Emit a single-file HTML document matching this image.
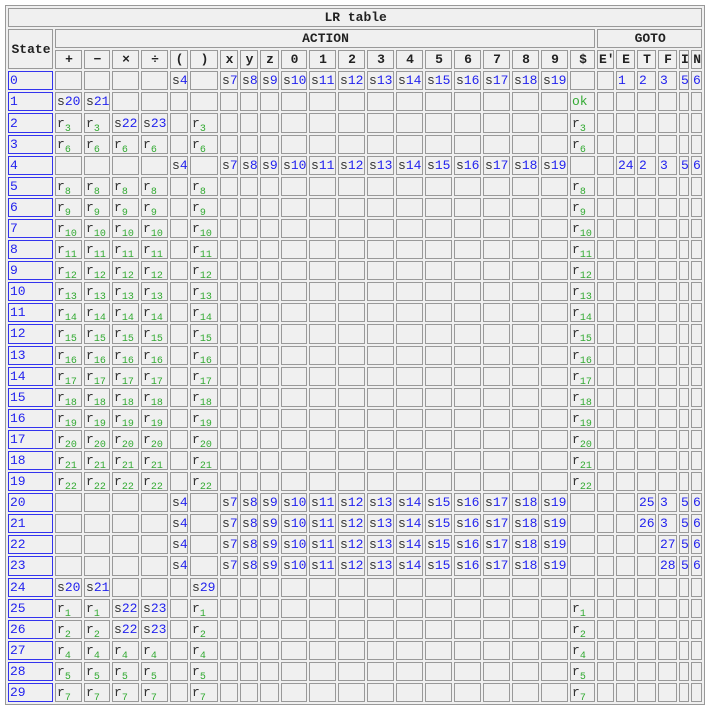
<!DOCTYPE html>
<html><head><meta charset="utf-8"><style>
body{margin:0;background:#fff;}
table{position:absolute;left:5px;top:5px;border:1px solid #999;border-spacing:2px;table-layout:fixed;width:700px;background:#f0f0f0;font-family:"Liberation Mono",monospace;font-size:13px;color:#333;}
td,th{border:1px solid #999;padding:0 0 0 1px;height:19.1px;box-sizing:border-box;white-space:nowrap;overflow:hidden;text-align:left;line-height:15px;}
th{text-align:center;font-weight:bold;font-size:13px;color:#222;}
td.st{border-color:#3333ee;color:#2222ee;}
b{font-weight:normal;color:#2222ee;}
sub{color:#33aa33;font-size:10px;vertical-align:-4px;line-height:0;}
i{font-style:normal;color:#33aa33;}
td.g{color:#2222ee;}
</style></head><body>
<table>
<colgroup>
<col style="width:45px"><col style="width:27px"><col style="width:26px"><col style="width:27px"><col style="width:27px"><col style="width:18px"><col style="width:28px"><col style="width:18px"><col style="width:18px"><col style="width:19px"><col style="width:26px"><col style="width:27px"><col style="width:27px"><col style="width:27px"><col style="width:27px"><col style="width:27px"><col style="width:27px"><col style="width:27px"><col style="width:27px"><col style="width:27px"><col style="width:25px"><col style="width:17px"><col style="width:19px"><col style="width:19px"><col style="width:19px"><col style="width:10px"><col style="width:11px">
</colgroup>
<tr><th colspan="27">LR table</th></tr>
<tr><th rowspan="2">State</th><th colspan="20">ACTION</th><th colspan="6">GOTO</th></tr>
<tr><th>+</th><th>−</th><th>×</th><th>÷</th><th>(</th><th>)</th><th>x</th><th>y</th><th>z</th><th>0</th><th>1</th><th>2</th><th>3</th><th>4</th><th>5</th><th>6</th><th>7</th><th>8</th><th>9</th><th>$</th><th>E'</th><th>E</th><th>T</th><th>F</th><th>I</th><th>N</th></tr>
<tr><td class="st">0</td><td></td><td></td><td></td><td></td><td>s<b>4</b></td><td></td><td>s<b>7</b></td><td>s<b>8</b></td><td>s<b>9</b></td><td>s<b>10</b></td><td>s<b>11</b></td><td>s<b>12</b></td><td>s<b>13</b></td><td>s<b>14</b></td><td>s<b>15</b></td><td>s<b>16</b></td><td>s<b>17</b></td><td>s<b>18</b></td><td>s<b>19</b></td><td></td><td></td><td class="g">1</td><td class="g">2</td><td class="g">3</td><td class="g">5</td><td class="g">6</td></tr>
<tr><td class="st">1</td><td>s<b>20</b></td><td>s<b>21</b></td><td></td><td></td><td></td><td></td><td></td><td></td><td></td><td></td><td></td><td></td><td></td><td></td><td></td><td></td><td></td><td></td><td></td><td><i>ok</i></td><td></td><td></td><td></td><td></td><td></td><td></td></tr>
<tr><td class="st">2</td><td>r<sub>3</sub></td><td>r<sub>3</sub></td><td>s<b>22</b></td><td>s<b>23</b></td><td></td><td>r<sub>3</sub></td><td></td><td></td><td></td><td></td><td></td><td></td><td></td><td></td><td></td><td></td><td></td><td></td><td></td><td>r<sub>3</sub></td><td></td><td></td><td></td><td></td><td></td><td></td></tr>
<tr><td class="st">3</td><td>r<sub>6</sub></td><td>r<sub>6</sub></td><td>r<sub>6</sub></td><td>r<sub>6</sub></td><td></td><td>r<sub>6</sub></td><td></td><td></td><td></td><td></td><td></td><td></td><td></td><td></td><td></td><td></td><td></td><td></td><td></td><td>r<sub>6</sub></td><td></td><td></td><td></td><td></td><td></td><td></td></tr>
<tr><td class="st">4</td><td></td><td></td><td></td><td></td><td>s<b>4</b></td><td></td><td>s<b>7</b></td><td>s<b>8</b></td><td>s<b>9</b></td><td>s<b>10</b></td><td>s<b>11</b></td><td>s<b>12</b></td><td>s<b>13</b></td><td>s<b>14</b></td><td>s<b>15</b></td><td>s<b>16</b></td><td>s<b>17</b></td><td>s<b>18</b></td><td>s<b>19</b></td><td></td><td></td><td class="g">24</td><td class="g">2</td><td class="g">3</td><td class="g">5</td><td class="g">6</td></tr>
<tr><td class="st">5</td><td>r<sub>8</sub></td><td>r<sub>8</sub></td><td>r<sub>8</sub></td><td>r<sub>8</sub></td><td></td><td>r<sub>8</sub></td><td></td><td></td><td></td><td></td><td></td><td></td><td></td><td></td><td></td><td></td><td></td><td></td><td></td><td>r<sub>8</sub></td><td></td><td></td><td></td><td></td><td></td><td></td></tr>
<tr><td class="st">6</td><td>r<sub>9</sub></td><td>r<sub>9</sub></td><td>r<sub>9</sub></td><td>r<sub>9</sub></td><td></td><td>r<sub>9</sub></td><td></td><td></td><td></td><td></td><td></td><td></td><td></td><td></td><td></td><td></td><td></td><td></td><td></td><td>r<sub>9</sub></td><td></td><td></td><td></td><td></td><td></td><td></td></tr>
<tr><td class="st">7</td><td>r<sub>10</sub></td><td>r<sub>10</sub></td><td>r<sub>10</sub></td><td>r<sub>10</sub></td><td></td><td>r<sub>10</sub></td><td></td><td></td><td></td><td></td><td></td><td></td><td></td><td></td><td></td><td></td><td></td><td></td><td></td><td>r<sub>10</sub></td><td></td><td></td><td></td><td></td><td></td><td></td></tr>
<tr><td class="st">8</td><td>r<sub>11</sub></td><td>r<sub>11</sub></td><td>r<sub>11</sub></td><td>r<sub>11</sub></td><td></td><td>r<sub>11</sub></td><td></td><td></td><td></td><td></td><td></td><td></td><td></td><td></td><td></td><td></td><td></td><td></td><td></td><td>r<sub>11</sub></td><td></td><td></td><td></td><td></td><td></td><td></td></tr>
<tr><td class="st">9</td><td>r<sub>12</sub></td><td>r<sub>12</sub></td><td>r<sub>12</sub></td><td>r<sub>12</sub></td><td></td><td>r<sub>12</sub></td><td></td><td></td><td></td><td></td><td></td><td></td><td></td><td></td><td></td><td></td><td></td><td></td><td></td><td>r<sub>12</sub></td><td></td><td></td><td></td><td></td><td></td><td></td></tr>
<tr><td class="st">10</td><td>r<sub>13</sub></td><td>r<sub>13</sub></td><td>r<sub>13</sub></td><td>r<sub>13</sub></td><td></td><td>r<sub>13</sub></td><td></td><td></td><td></td><td></td><td></td><td></td><td></td><td></td><td></td><td></td><td></td><td></td><td></td><td>r<sub>13</sub></td><td></td><td></td><td></td><td></td><td></td><td></td></tr>
<tr><td class="st">11</td><td>r<sub>14</sub></td><td>r<sub>14</sub></td><td>r<sub>14</sub></td><td>r<sub>14</sub></td><td></td><td>r<sub>14</sub></td><td></td><td></td><td></td><td></td><td></td><td></td><td></td><td></td><td></td><td></td><td></td><td></td><td></td><td>r<sub>14</sub></td><td></td><td></td><td></td><td></td><td></td><td></td></tr>
<tr><td class="st">12</td><td>r<sub>15</sub></td><td>r<sub>15</sub></td><td>r<sub>15</sub></td><td>r<sub>15</sub></td><td></td><td>r<sub>15</sub></td><td></td><td></td><td></td><td></td><td></td><td></td><td></td><td></td><td></td><td></td><td></td><td></td><td></td><td>r<sub>15</sub></td><td></td><td></td><td></td><td></td><td></td><td></td></tr>
<tr><td class="st">13</td><td>r<sub>16</sub></td><td>r<sub>16</sub></td><td>r<sub>16</sub></td><td>r<sub>16</sub></td><td></td><td>r<sub>16</sub></td><td></td><td></td><td></td><td></td><td></td><td></td><td></td><td></td><td></td><td></td><td></td><td></td><td></td><td>r<sub>16</sub></td><td></td><td></td><td></td><td></td><td></td><td></td></tr>
<tr><td class="st">14</td><td>r<sub>17</sub></td><td>r<sub>17</sub></td><td>r<sub>17</sub></td><td>r<sub>17</sub></td><td></td><td>r<sub>17</sub></td><td></td><td></td><td></td><td></td><td></td><td></td><td></td><td></td><td></td><td></td><td></td><td></td><td></td><td>r<sub>17</sub></td><td></td><td></td><td></td><td></td><td></td><td></td></tr>
<tr><td class="st">15</td><td>r<sub>18</sub></td><td>r<sub>18</sub></td><td>r<sub>18</sub></td><td>r<sub>18</sub></td><td></td><td>r<sub>18</sub></td><td></td><td></td><td></td><td></td><td></td><td></td><td></td><td></td><td></td><td></td><td></td><td></td><td></td><td>r<sub>18</sub></td><td></td><td></td><td></td><td></td><td></td><td></td></tr>
<tr><td class="st">16</td><td>r<sub>19</sub></td><td>r<sub>19</sub></td><td>r<sub>19</sub></td><td>r<sub>19</sub></td><td></td><td>r<sub>19</sub></td><td></td><td></td><td></td><td></td><td></td><td></td><td></td><td></td><td></td><td></td><td></td><td></td><td></td><td>r<sub>19</sub></td><td></td><td></td><td></td><td></td><td></td><td></td></tr>
<tr><td class="st">17</td><td>r<sub>20</sub></td><td>r<sub>20</sub></td><td>r<sub>20</sub></td><td>r<sub>20</sub></td><td></td><td>r<sub>20</sub></td><td></td><td></td><td></td><td></td><td></td><td></td><td></td><td></td><td></td><td></td><td></td><td></td><td></td><td>r<sub>20</sub></td><td></td><td></td><td></td><td></td><td></td><td></td></tr>
<tr><td class="st">18</td><td>r<sub>21</sub></td><td>r<sub>21</sub></td><td>r<sub>21</sub></td><td>r<sub>21</sub></td><td></td><td>r<sub>21</sub></td><td></td><td></td><td></td><td></td><td></td><td></td><td></td><td></td><td></td><td></td><td></td><td></td><td></td><td>r<sub>21</sub></td><td></td><td></td><td></td><td></td><td></td><td></td></tr>
<tr><td class="st">19</td><td>r<sub>22</sub></td><td>r<sub>22</sub></td><td>r<sub>22</sub></td><td>r<sub>22</sub></td><td></td><td>r<sub>22</sub></td><td></td><td></td><td></td><td></td><td></td><td></td><td></td><td></td><td></td><td></td><td></td><td></td><td></td><td>r<sub>22</sub></td><td></td><td></td><td></td><td></td><td></td><td></td></tr>
<tr><td class="st">20</td><td></td><td></td><td></td><td></td><td>s<b>4</b></td><td></td><td>s<b>7</b></td><td>s<b>8</b></td><td>s<b>9</b></td><td>s<b>10</b></td><td>s<b>11</b></td><td>s<b>12</b></td><td>s<b>13</b></td><td>s<b>14</b></td><td>s<b>15</b></td><td>s<b>16</b></td><td>s<b>17</b></td><td>s<b>18</b></td><td>s<b>19</b></td><td></td><td></td><td></td><td class="g">25</td><td class="g">3</td><td class="g">5</td><td class="g">6</td></tr>
<tr><td class="st">21</td><td></td><td></td><td></td><td></td><td>s<b>4</b></td><td></td><td>s<b>7</b></td><td>s<b>8</b></td><td>s<b>9</b></td><td>s<b>10</b></td><td>s<b>11</b></td><td>s<b>12</b></td><td>s<b>13</b></td><td>s<b>14</b></td><td>s<b>15</b></td><td>s<b>16</b></td><td>s<b>17</b></td><td>s<b>18</b></td><td>s<b>19</b></td><td></td><td></td><td></td><td class="g">26</td><td class="g">3</td><td class="g">5</td><td class="g">6</td></tr>
<tr><td class="st">22</td><td></td><td></td><td></td><td></td><td>s<b>4</b></td><td></td><td>s<b>7</b></td><td>s<b>8</b></td><td>s<b>9</b></td><td>s<b>10</b></td><td>s<b>11</b></td><td>s<b>12</b></td><td>s<b>13</b></td><td>s<b>14</b></td><td>s<b>15</b></td><td>s<b>16</b></td><td>s<b>17</b></td><td>s<b>18</b></td><td>s<b>19</b></td><td></td><td></td><td></td><td></td><td class="g">27</td><td class="g">5</td><td class="g">6</td></tr>
<tr><td class="st">23</td><td></td><td></td><td></td><td></td><td>s<b>4</b></td><td></td><td>s<b>7</b></td><td>s<b>8</b></td><td>s<b>9</b></td><td>s<b>10</b></td><td>s<b>11</b></td><td>s<b>12</b></td><td>s<b>13</b></td><td>s<b>14</b></td><td>s<b>15</b></td><td>s<b>16</b></td><td>s<b>17</b></td><td>s<b>18</b></td><td>s<b>19</b></td><td></td><td></td><td></td><td></td><td class="g">28</td><td class="g">5</td><td class="g">6</td></tr>
<tr><td class="st">24</td><td>s<b>20</b></td><td>s<b>21</b></td><td></td><td></td><td></td><td>s<b>29</b></td><td></td><td></td><td></td><td></td><td></td><td></td><td></td><td></td><td></td><td></td><td></td><td></td><td></td><td></td><td></td><td></td><td></td><td></td><td></td><td></td></tr>
<tr><td class="st">25</td><td>r<sub>1</sub></td><td>r<sub>1</sub></td><td>s<b>22</b></td><td>s<b>23</b></td><td></td><td>r<sub>1</sub></td><td></td><td></td><td></td><td></td><td></td><td></td><td></td><td></td><td></td><td></td><td></td><td></td><td></td><td>r<sub>1</sub></td><td></td><td></td><td></td><td></td><td></td><td></td></tr>
<tr><td class="st">26</td><td>r<sub>2</sub></td><td>r<sub>2</sub></td><td>s<b>22</b></td><td>s<b>23</b></td><td></td><td>r<sub>2</sub></td><td></td><td></td><td></td><td></td><td></td><td></td><td></td><td></td><td></td><td></td><td></td><td></td><td></td><td>r<sub>2</sub></td><td></td><td></td><td></td><td></td><td></td><td></td></tr>
<tr><td class="st">27</td><td>r<sub>4</sub></td><td>r<sub>4</sub></td><td>r<sub>4</sub></td><td>r<sub>4</sub></td><td></td><td>r<sub>4</sub></td><td></td><td></td><td></td><td></td><td></td><td></td><td></td><td></td><td></td><td></td><td></td><td></td><td></td><td>r<sub>4</sub></td><td></td><td></td><td></td><td></td><td></td><td></td></tr>
<tr><td class="st">28</td><td>r<sub>5</sub></td><td>r<sub>5</sub></td><td>r<sub>5</sub></td><td>r<sub>5</sub></td><td></td><td>r<sub>5</sub></td><td></td><td></td><td></td><td></td><td></td><td></td><td></td><td></td><td></td><td></td><td></td><td></td><td></td><td>r<sub>5</sub></td><td></td><td></td><td></td><td></td><td></td><td></td></tr>
<tr><td class="st">29</td><td>r<sub>7</sub></td><td>r<sub>7</sub></td><td>r<sub>7</sub></td><td>r<sub>7</sub></td><td></td><td>r<sub>7</sub></td><td></td><td></td><td></td><td></td><td></td><td></td><td></td><td></td><td></td><td></td><td></td><td></td><td></td><td>r<sub>7</sub></td><td></td><td></td><td></td><td></td><td></td><td></td></tr>
</table>
</body></html>
